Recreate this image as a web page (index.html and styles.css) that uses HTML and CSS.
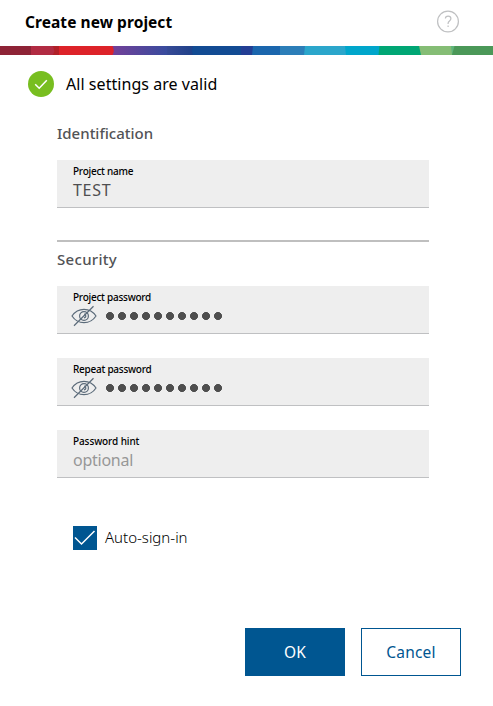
FILE: index.html
```html
<!DOCTYPE html>
<html lang="en">
<head>
    <meta charset="UTF-8">
    <meta name="viewport" content="width=device-width, initial-scale=1.0">
    <title>Create new project</title>
    <link rel="stylesheet" href="styles.css">
</head>
<body>
    <div class="dialog">
        <div class="header">
            <h1 class="title">Create new project</h1>
            <svg class="help" viewBox="0 0 24 24">
                <circle cx="12" cy="11.500" r="10.400"/>
                <path d="M9.400 8.600C9.400 7 10.500 6.200 12.100 6.200s2.800.9 2.800 2.500c0 2.200-2.800 2.300-2.800 4.500v.8"/>
                <path d="M12.100 15.500v1.600"/>
            </svg>
        </div>

        <!-- Supergraphic -->
        <svg class="stripe" viewBox="0 0 493 9" preserveAspectRatio="none">
            <defs>
                <linearGradient id="violet">
                    <stop offset="0" stop-color="#753f98"/>
                    <stop offset="1" stop-color="#374c9e"/>
                </linearGradient>
                <linearGradient id="navy">
                    <stop offset="0" stop-color="#374a96"/>
                    <stop offset="1" stop-color="#1d4088"/>
                </linearGradient>
            </defs>
            <path fill="#8e2336" d="M0 0h32v9H0z"/>
            <path fill="#b12028" d="M31 0h30v9H31z"/>
            <path fill="#b12b42" d="M31 0h21.500q3.500 4.500 0 9H31z"/>
            <path fill="url(#violet)" d="M110 0h58v9h-58z"/>
            <path fill="#dd2229" d="M59 0h53.500q2.500 4.500 0 9H59z"/>
            <path fill="url(#navy)" d="M167 0h28v9h-28z"/>
            <path fill="#124b93" d="M193 0h49v9h-49q-2-4.500 0-9z"/>
            <path fill="#233e94" d="M241 0h12v9h-12z"/>
            <path fill="#1b66ad" d="M253 0h28v9h-29z"/>
            <path fill="#2c7eb8" d="M280 0h26v9h-26z"/>
            <path fill="#2ba6cb" d="M305 0h42v9h-43z"/>
            <path fill="#00a6cb" d="M345 0h36v9h-35z"/>
            <path fill="#00a674" d="M379.500 0h42v9h-43z"/>
            <path fill="#5eb47b" d="M450 0h6v9h-6z"/>
            <path fill="#85bd75" d="M419 0h32l1 9h-31z"/>
            <path fill="#4b9858" d="M454.500 0H493v9h-41z"/>
        </svg>

        <div class="status">
            <svg class="status-icon" viewBox="0 0 26 26">
                <circle cx="13" cy="13" r="13"/>
                <path d="M7.200 13.300l4 4 7.600-8"/>
            </svg>
            <span class="status-text">All settings are valid</span>
        </div>

        <div class="form">
            <h2 class="section">Identification</h2>
            <div class="field">
                <span class="label">Project name</span>
                <span class="value name">TEST</span>
            </div>

            <div class="divider"></div>

            <h2 class="section security">Security</h2>
            <div class="field">
                <span class="label">Project password</span>
                <div class="password">
                    <svg class="eye" viewBox="0 0 26 22">
                        <path d="M1 11C4 6.500 8 4.300 13 4.300S22 6.500 25 11c-3 4.500-7 6.700-12 6.700S4 15.500 1 11z"/>
                        <circle cx="13" cy="11" r="4.400"/>
                        <path d="M13 9.200a1.800 1.800 0 0 1 0 3.600M3 20.700L22.500 1.300"/>
                    </svg>
                    <span class="dots"></span>
                </div>
            </div>
            <div class="field">
                <span class="label">Repeat password</span>
                <div class="password">
                    <svg class="eye" viewBox="0 0 26 22">
                        <path d="M1 11C4 6.500 8 4.300 13 4.300S22 6.500 25 11c-3 4.500-7 6.700-12 6.700S4 15.500 1 11z"/>
                        <circle cx="13" cy="11" r="4.400"/>
                        <path d="M13 9.200a1.800 1.800 0 0 1 0 3.600M3 20.700L22.500 1.300"/>
                    </svg>
                    <span class="dots"></span>
                </div>
            </div>
            <div class="field">
                <span class="label hint">Password hint</span>
                <span class="value placeholder">optional</span>
            </div>

            <div class="checkbox">
                <svg class="box" viewBox="0 0 24 24">
                    <path d="M2 11.500l6.500 6.500L21.500 5"/>
                </svg>
                <span class="checkbox-text">Auto-sign-in</span>
            </div>
        </div>

        <div class="buttons">
            <button class="btn ok">OK</button>
            <button class="btn cancel">Cancel</button>
        </div>
    </div>
</body>
</html>
```
FILE: styles.css
```css
* {
    box-sizing: border-box;
    margin: 0;
    padding: 0;
}

body {
    font-family: "Noto Sans", sans-serif;
    font-size: 16px;
    color: #000;
    background-color: #fff;
}

svg {
    display: block;
    flex: none;
    fill: none;
}

.dialog {
    display: flex;
    flex-direction: column;
    height: 706px;
    white-space: nowrap;
}

/* Header */
.header {
    display: flex;
    justify-content: space-between;
    height: 46px;
    padding: 10px 33px 0 25px;
}

.title {
    font-size: 15.5px;
    font-weight: 700;
    line-height: 25px;
    letter-spacing: 0.06px;
}

.help {
    width: 24px;
    height: 24px;
    stroke: #bfc0c2;
    stroke-width: 1.2;
}

.stripe {
    width: 100%;
    height: 9px;
}

/* Validation status */
.status {
    display: flex;
    align-items: center;
    gap: 12px;
    height: 26px;
    margin: 16px 0 0 28px;
}

.status-text {
    letter-spacing: 0.05px;
}

.status-icon {
    width: 26px;
    height: 26px;
}

.status-icon circle {
    fill: #78be20;
}

.status-icon path {
    stroke: #fff;
    stroke-width: 1.5;
}

/* Form */
.form {
    width: 372px;
    margin: 24px 0 0 57px;
}

.section {
    font-size: 15px;
    font-weight: 500;
    line-height: 24px;
    color: #525356;
    margin-bottom: 15px;
}

.security {
    letter-spacing: 0.3px;
}

.field {
    height: 48px;
    padding: 4px 16px 0;
    margin-bottom: 24px;
    background-color: #eee;
    border-bottom: 1px solid #bfc0c2;
}

.label {
    display: block;
    font-size: 10px;
    font-weight: 500;
    line-height: 15px;
    letter-spacing: -0.25px;
}

.label.hint {
    letter-spacing: -0.1px;
}

.value {
    display: block;
    color: #4e4e50;
    line-height: 23px;
}

.value.name {
    letter-spacing: 0.7px;
}

.placeholder {
    color: #979797;
    letter-spacing: -0.25px;
}

.divider {
    height: 2px;
    margin: 32px 0 5px;
    background-color: #bfbfbf;
}

.password {
    display: flex;
    align-items: center;
    gap: 7px;
    height: 22px;
    margin-left: -2px;
}

.eye {
    width: 26px;
    height: 22px;
    margin-top: -1px;
    stroke: #5b6b7a;
    stroke-width: 1.2;
}

/* Masked characters */
.dots {
    width: 120px;
    height: 12px;
    background-image: radial-gradient(circle, #4e4e4e 3.7px, transparent 4.3px);
    background-size: 12px 12px;
}

.checkbox {
    display: flex;
    align-items: center;
    gap: 8px;
    height: 24px;
    margin: 48px 0 0 16px;
}

.box {
    width: 24px;
    height: 24px;
    background-color: #005691;
    stroke: #fff;
    stroke-width: 1.5;
}

.checkbox-text {
    font-size: 15px;
    font-weight: 300;
    line-height: 22px;
    margin-top: -2px;
}

/* Actions */
.buttons {
    display: flex;
    justify-content: flex-end;
    gap: 16px;
    margin-top: auto;
    padding: 0 32px 30px 0;
}

.btn {
    width: 100px;
    height: 48px;
    padding-bottom: 1px;
    font-family: inherit;
    font-size: 15.5px;
    letter-spacing: 0.2px;
    border: 1px solid #005691;
}

.ok {
    color: #fff;
    background-color: #005691;
}

.cancel {
    color: #005691;
    background-color: #fff;
}
```
